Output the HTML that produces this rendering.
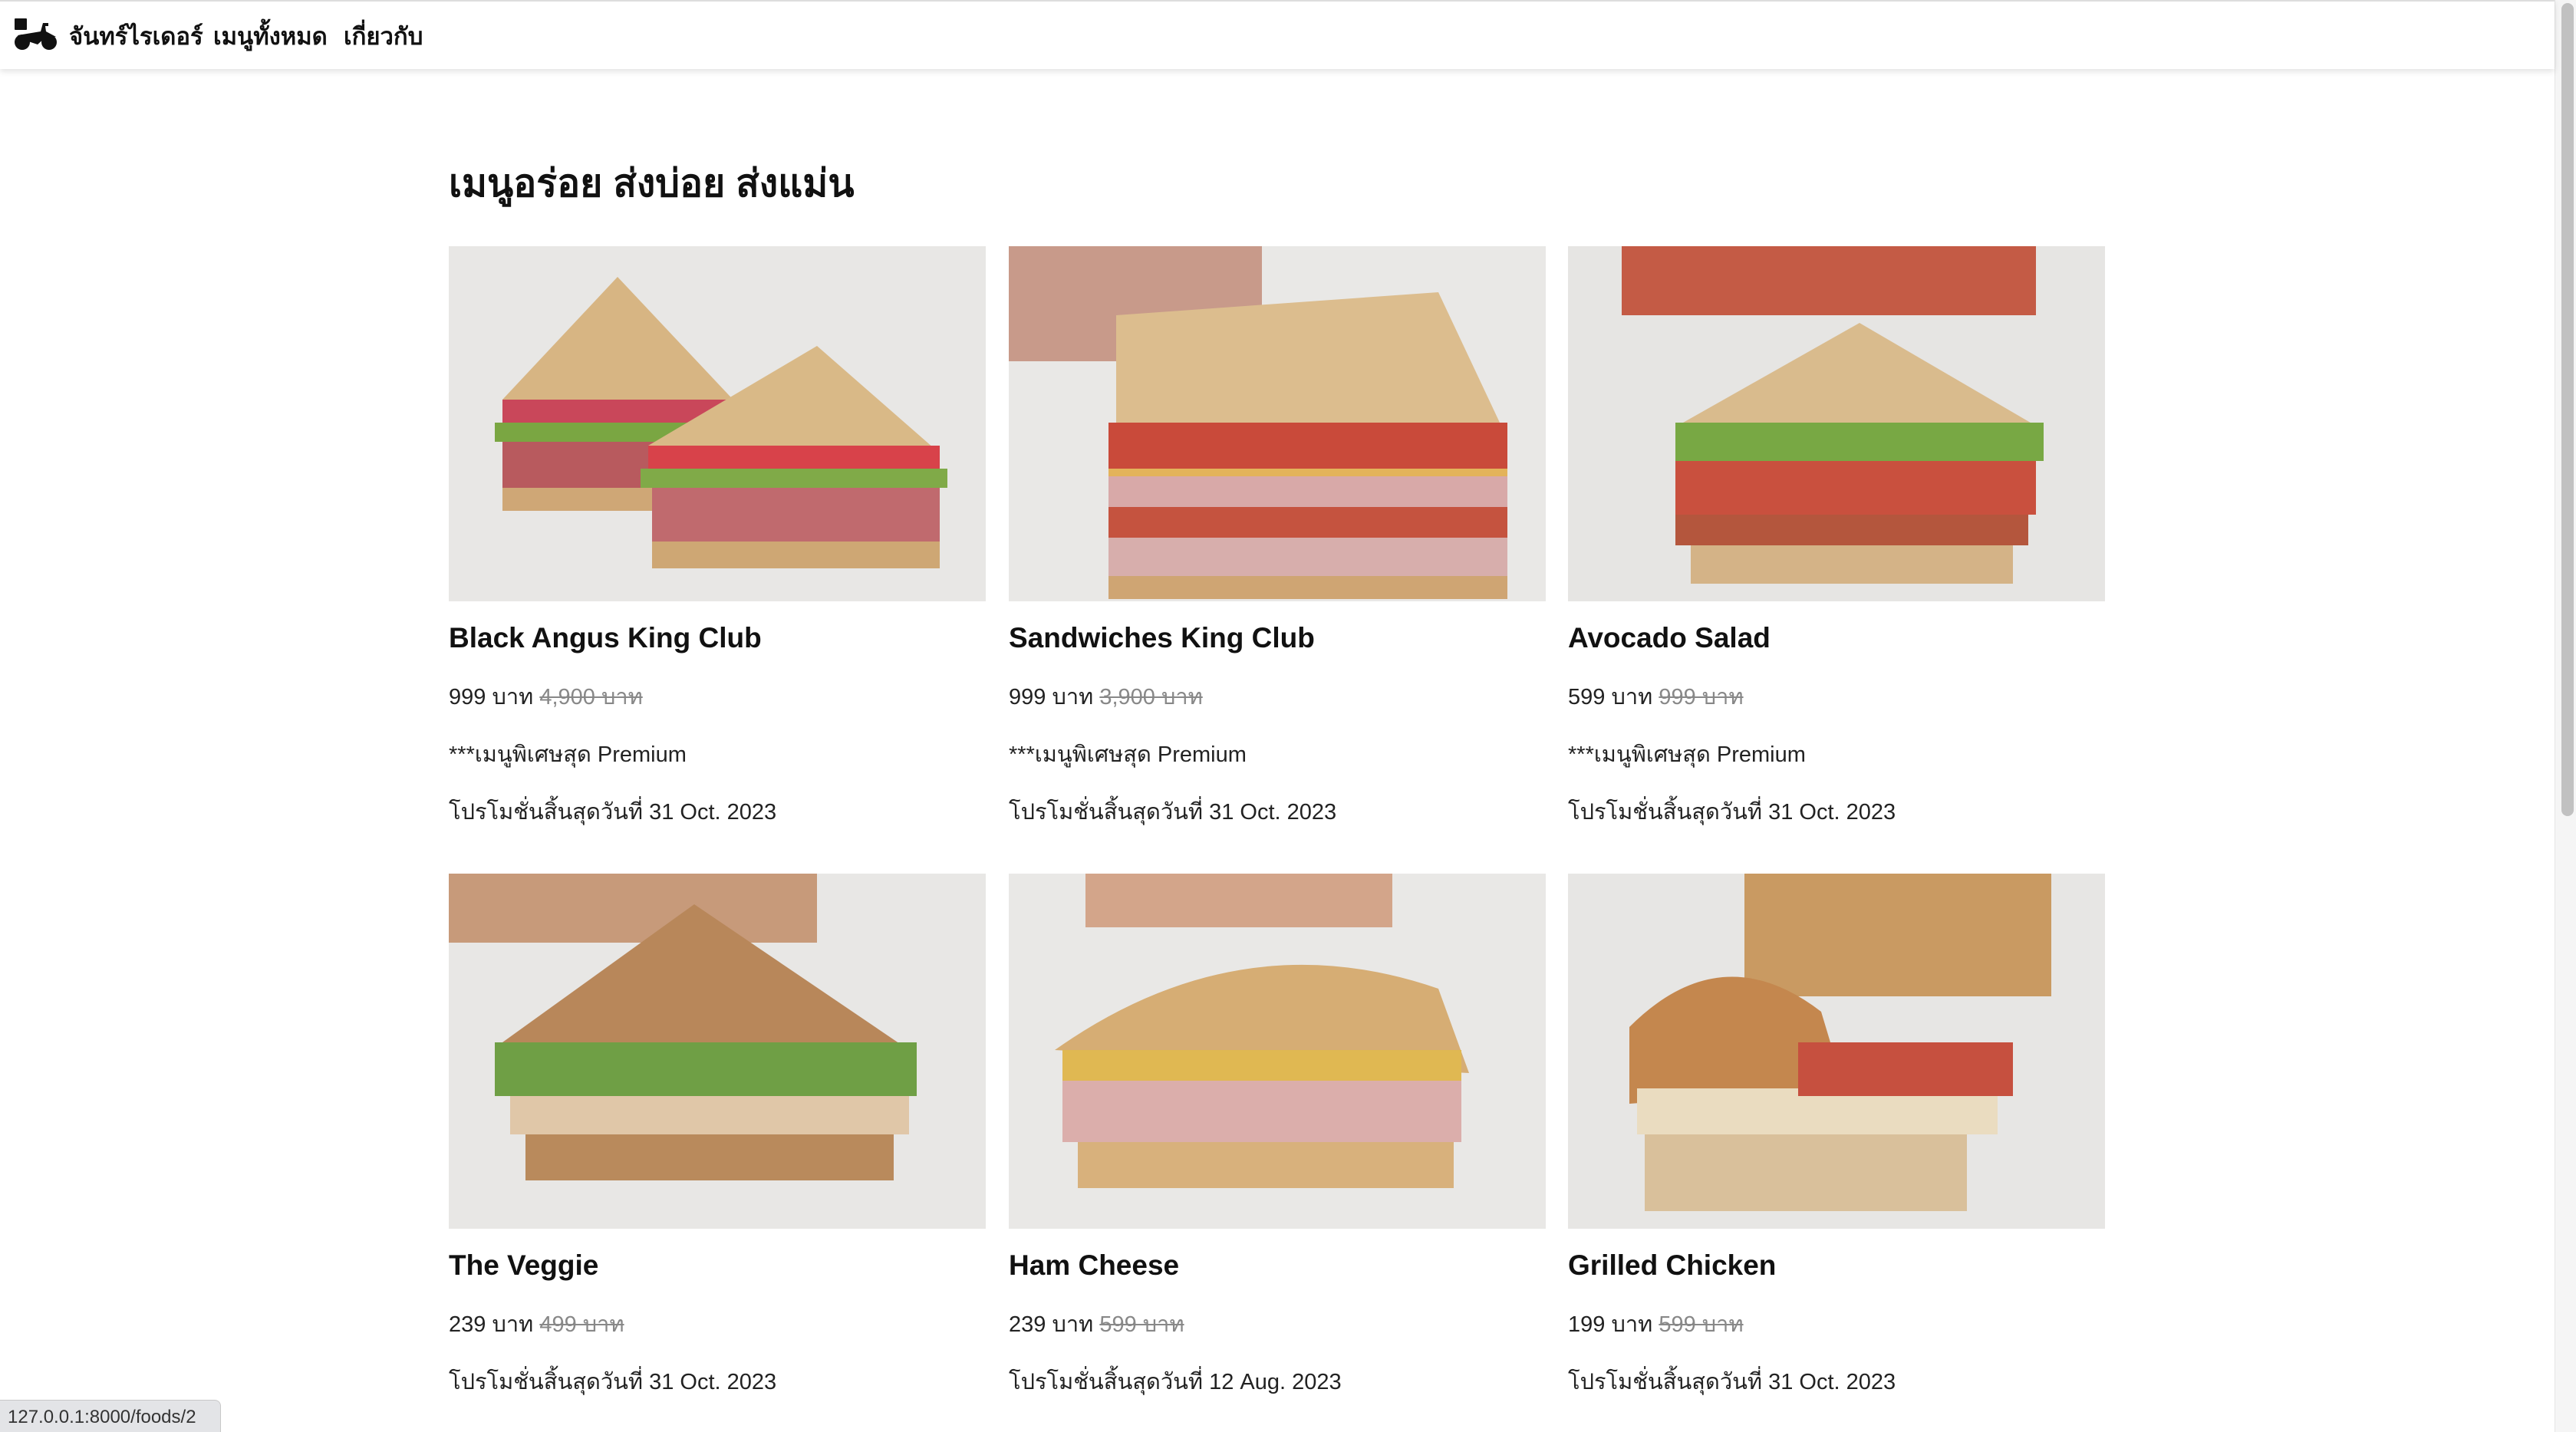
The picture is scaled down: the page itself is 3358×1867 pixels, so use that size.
<!DOCTYPE html>
<html><head><meta charset="utf-8"><style>
*{margin:0;padding:0;box-sizing:border-box}
html,body{width:3358px;height:1867px;overflow:hidden;background:#fff;font-family:"Liberation Sans","Noto Sans CJK SC",sans-serif;color:#111}
.nav{position:absolute;left:0;top:0;width:3330px;height:90px;background:#fff;border-top:2px solid #ddd;box-shadow:0 3px 8px rgba(0,0,0,.12);z-index:2}
.nav span{position:absolute;top:20px;font-size:31px;font-weight:bold;white-space:nowrap}
.sb{position:absolute;left:3330px;top:0;width:28px;height:1867px;background:#f5f5f5;border-left:1px solid #e6e6e6}
.sb div{position:absolute;left:8px;top:4px;width:16px;height:1060px;background:#c1c1c1;border-radius:8px}
h1{position:absolute;left:585px;top:200px;font-size:50px;font-weight:bold;white-space:nowrap}
.card{position:absolute;width:700px}
.card svg{display:block;width:700px;height:463px}
.t{position:absolute;left:0;font-size:37px;font-weight:bold;white-space:nowrap}
.p{position:absolute;left:0;font-size:29px;white-space:nowrap;color:#222}
.p s{color:#888}
.status{position:absolute;left:0;top:1825px;width:288px;height:42px;background:#e3e4e7;border:1px solid #c8c8c8;border-left:none;border-bottom:none;border-top-right-radius:8px;font-size:24px;color:#333;padding:8px 0 0 10px;font-family:"Liberation Sans",sans-serif}
</style></head><body>
<div class="nav">
<svg style="position:absolute;left:19px;top:22px" width="56" height="42" viewBox="0 0 56 42"><rect x="0" y="0" width="16" height="15" rx="1" fill="#111"/><circle cx="10" cy="31" r="10" fill="#111"/><circle cx="45" cy="31" r="10" fill="#111"/><path d="M4 22 L34 17 L37 6 L44 6 L44 10 L40 10 L41 17 L54 24 L40 25 L30 34 L18 30 Z" fill="#111"/></svg>
<span style="left:90px">จันทร์ไรเดอร์</span>
<span style="left:278px">เมนูทั้งหมด</span>
<span style="left:448px">เกี่ยวกับ</span>
</div>
<div class="sb"><div></div></div>
<h1>เมนูอร่อย ส่งบ่อย ส่งแม่น</h1>

<div class="card" style="left:585px;top:321px">
<svg viewBox="0 0 700 463"><rect width="700" height="463" fill="#e8e7e5"/><path d="M70 200 L220 40 L380 210 Z" fill="#d7b583"/><rect x="70" y="200" width="320" height="30" fill="#c9475a"/><rect x="60" y="230" width="330" height="25" fill="#7aa642"/><rect x="70" y="255" width="320" height="60" fill="#b85a5e"/><rect x="70" y="315" width="320" height="30" fill="#cfa776"/><path d="M260 260 L480 130 L640 270 Z" fill="#d9b987"/><rect x="260" y="260" width="380" height="30" fill="#d8424a"/><rect x="250" y="290" width="400" height="25" fill="#80aa48"/><rect x="265" y="315" width="375" height="70" fill="#c06a6e"/><rect x="265" y="385" width="375" height="35" fill="#cea774"/></svg>
<div class="t" style="top:490px">Black Angus King Club</div>
<div class="p" style="top:564px">999 บาท <s>4,900 บาท</s></div>
<div class="p" style="top:639px">***เมนูพิเศษสุด Premium</div>
<div class="p" style="top:714px">โปรโมชั่นสิ้นสุดวันที่ 31 Oct. 2023</div>
</div>

<div class="card" style="left:1315px;top:321px">
<svg viewBox="0 0 700 463"><rect width="700" height="463" fill="#e9e8e6"/><rect x="0" y="0" width="330" height="150" fill="#c89a8a"/><path d="M140 90 L560 60 L640 230 L140 240 Z" fill="#dcbd8e"/><rect x="130" y="230" width="520" height="60" fill="#c94a3a"/><rect x="130" y="290" width="520" height="50" fill="#e3b35a"/><rect x="130" y="300" width="520" height="40" fill="#d8a9a8"/><rect x="130" y="340" width="520" height="40" fill="#c5533f"/><rect x="130" y="380" width="520" height="55" fill="#d7aeac"/><rect x="130" y="430" width="520" height="30" fill="#cfa573"/></svg>
<div class="t" style="top:490px">Sandwiches King Club</div>
<div class="p" style="top:564px">999 บาท <s>3,900 บาท</s></div>
<div class="p" style="top:639px">***เมนูพิเศษสุด Premium</div>
<div class="p" style="top:714px">โปรโมชั่นสิ้นสุดวันที่ 31 Oct. 2023</div>
</div>

<div class="card" style="left:2044px;top:321px">
<svg viewBox="0 0 700 463"><rect width="700" height="463" fill="#e6e5e3"/><rect x="70" y="0" width="540" height="90" fill="#c45b45"/><path d="M150 230 L380 100 L620 240 Z" fill="#d9bb8d"/><rect x="140" y="230" width="480" height="50" fill="#78a844"/><rect x="140" y="280" width="470" height="70" fill="#c9503e"/><rect x="140" y="350" width="460" height="40" fill="#b4563d"/><rect x="160" y="390" width="420" height="50" fill="#d4b387"/></svg>
<div class="t" style="top:490px">Avocado Salad</div>
<div class="p" style="top:564px">599 บาท <s>999 บาท</s></div>
<div class="p" style="top:639px">***เมนูพิเศษสุด Premium</div>
<div class="p" style="top:714px">โปรโมชั่นสิ้นสุดวันที่ 31 Oct. 2023</div>
</div>

<div class="card" style="left:585px;top:1139px">
<svg viewBox="0 0 700 463"><rect width="700" height="463" fill="#e8e7e5"/><rect x="0" y="0" width="480" height="90" fill="#c79a7a"/><path d="M70 220 L320 40 L600 230 Z" fill="#b8875a"/><rect x="60" y="220" width="550" height="70" fill="#6f9f45"/><rect x="80" y="290" width="520" height="50" fill="#e0c7a8"/><rect x="100" y="340" width="480" height="60" fill="#b98a5c"/></svg>
<div class="t" style="top:490px">The Veggie</div>
<div class="p" style="top:564px">239 บาท <s>499 บาท</s></div>
<div class="p" style="top:639px">โปรโมชั่นสิ้นสุดวันที่ 31 Oct. 2023</div>
</div>

<div class="card" style="left:1315px;top:1139px">
<svg viewBox="0 0 700 463"><rect width="700" height="463" fill="#e9e8e6"/><rect x="100" y="0" width="400" height="70" fill="#d3a58a"/><path d="M60 230 Q300 60 560 150 L600 260 Z" fill="#d6ad74"/><rect x="70" y="230" width="520" height="40" fill="#e0b852"/><rect x="70" y="270" width="520" height="80" fill="#dbaeab"/><rect x="90" y="350" width="490" height="60" fill="#d8b17c"/></svg>
<div class="t" style="top:490px">Ham Cheese</div>
<div class="p" style="top:564px">239 บาท <s>599 บาท</s></div>
<div class="p" style="top:639px">โปรโมชั่นสิ้นสุดวันที่ 12 Aug. 2023</div>
</div>

<div class="card" style="left:2044px;top:1139px">
<svg viewBox="0 0 700 463"><rect width="700" height="463" fill="#e7e6e4"/><rect x="230" y="0" width="400" height="160" fill="#c99a62"/><path d="M80 200 Q200 80 330 180 L360 280 L80 300 Z" fill="#c4874e"/><rect x="90" y="280" width="470" height="60" fill="#eadcc0"/><rect x="100" y="340" width="420" height="100" fill="#d9c09b"/><rect x="300" y="220" width="280" height="70" fill="#c6503f"/></svg>
<div class="t" style="top:490px">Grilled Chicken</div>
<div class="p" style="top:564px">199 บาท <s>599 บาท</s></div>
<div class="p" style="top:639px">โปรโมชั่นสิ้นสุดวันที่ 31 Oct. 2023</div>
</div>

<div class="status">127.0.0.1:8000/foods/2</div>
</body></html>
